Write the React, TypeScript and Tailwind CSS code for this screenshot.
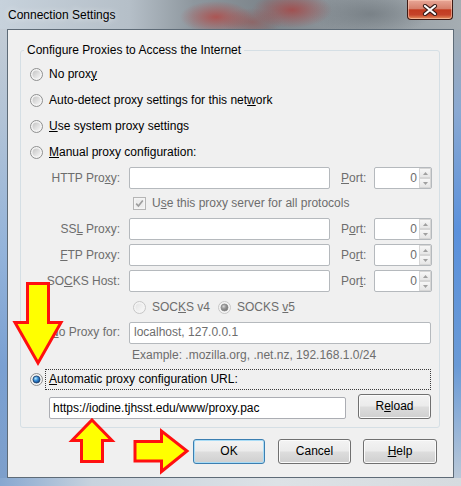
import { useId } from 'react';

function Radio({ checked = false, disabled = false }: { checked?: boolean; disabled?: boolean }) {
  const id = useId().replace(/:/g, '');
  return (
    <svg width="13" height="13" viewBox="0 0 13 13" className="shrink-0">
      <defs>
        <linearGradient id={`in${id}`} x1="0" y1="0" x2="1" y2="1">
          <stop offset="0" stopColor={disabled ? '#e4e4e4' : '#c4c4c4'} />
          <stop offset="1" stopColor={disabled ? '#f8f8f8' : '#f6f6f6'} />
        </linearGradient>
        <radialGradient id={`dot${id}`} cx="0.38" cy="0.35" r="0.7">
          <stop offset="0" stopColor={disabled ? '#d8d8d8' : '#b8ecff'} />
          <stop offset="0.45" stopColor={disabled ? '#9a9a9a' : '#3b8fd8'} />
          <stop offset="1" stopColor={disabled ? '#6f6f6f' : '#0b3f86'} />
        </radialGradient>
      </defs>
      <circle cx="6.5" cy="6.5" r="6" fill="#f4f4f4" stroke={disabled ? '#c6c6c6' : '#8e8f8f'} />
      <circle cx="6.5" cy="6.5" r="4" fill={`url(#in${id})`} />
      {checked && (
        <circle
          cx="6.5"
          cy="6.5"
          r="3.5"
          fill={`url(#dot${id})`}
          stroke={disabled ? '#8a8a8a' : '#1d3f66'}
          strokeWidth="0.8"
        />
      )}
    </svg>
  );
}

function CheckBoxDisabled() {
  return (
    <svg width="13" height="13" viewBox="0 0 13 13" className="shrink-0">
      <rect x="0.5" y="0.5" width="12" height="12" fill="#f4f4f4" stroke="#b5b5b5" />
      <rect x="2.5" y="2.5" width="8" height="8" fill="#ececec" />
      <path d="M3.2 6.6 L5.4 9 L9.8 3.4" fill="none" stroke="#9d9d9d" strokeWidth="1.6" />
    </svg>
  );
}

function Spin({ up }: { up?: boolean }) {
  return (
    <div className="h-[10px] border border-[#d6d6d6] bg-[linear-gradient(180deg,#f7f7f7,#e6e6e6)] flex items-center justify-center">
      <svg width="5" height="3" viewBox="0 0 5 3">
        <path d={up ? 'M0 3 L2.5 0 L5 3 Z' : 'M0 0 L2.5 3 L5 0 Z'} fill="#a0a0a0" />
      </svg>
    </div>
  );
}

function PortBox() {
  return (
    <div className="w-[58px] h-[22px] border border-[#b5b9bd] rounded-[2px] bg-white flex">
      <span className="flex-1 text-right pr-[2px] leading-[20px] text-[#6d6d6d]">0</span>
      <div className="w-[12px] flex flex-col">
        <Spin up />
        <Spin />
      </div>
    </div>
  );
}

function ProxyRow({ label, port }: { label: React.ReactNode; port: React.ReactNode }) {
  return (
    <div className="h-[26px] flex items-center">
      <span className="w-[99px] text-right text-[#6d6d6d]">{label}</span>
      <div className="ml-[9px] w-[201px] h-[22px] border border-[#b5b9bd] rounded-[2px] bg-white" />
      <span className="ml-[11px] w-[33px] text-[#6d6d6d]">{port}</span>
      <PortBox />
    </div>
  );
}

const btn =
  'h-[25px] flex items-center justify-center rounded-[3px] border bg-[linear-gradient(180deg,#f3f3f3_0%,#ebebeb_48%,#dddddd_52%,#cfcfcf_100%)]';

export default function App() {
  return (
    <div className="w-[461px] h-[486px] relative flex flex-col overflow-hidden font-['Liberation_Sans',Arial,sans-serif] text-[12px] leading-[15px] text-black">
      {/* title bar */}
      <div className="h-[29px] shrink-0 flex items-start bg-[image:radial-gradient(ellipse_36px_16px_at_216px_17px,rgba(180,70,66,0.8),transparent),radial-gradient(ellipse_40px_18px_at_292px_10px,rgba(170,62,60,0.75),transparent),radial-gradient(ellipse_30px_14px_at_252px_22px,rgba(150,80,78,0.6),transparent),radial-gradient(ellipse_60px_22px_at_370px_14px,rgba(110,118,124,0.7),transparent),linear-gradient(90deg,#c7d2dc_0%,#b5bfc8_28%,#8e979e_42%,#7c848a_58%,#8f979d_74%,#a5adb2_100%)]">
        <span className="ml-[8px] mt-[8px] [text-shadow:0_0_6px_rgba(255,255,255,0.85)]">
          Connection Settings
        </span>
        <div className="ml-auto mr-[8px] w-[46px] h-[20px] rounded-b-[4px] border border-t-0 border-[#3d1a14] bg-[linear-gradient(180deg,#e8a797_0%,#d6806c_45%,#c23b20_52%,#c5432a_78%,#e4915f_100%)] shadow-[inset_0_0_0_1px_rgba(255,210,190,0.55)] flex items-center justify-center">
          <svg width="16" height="12" viewBox="0 0 16 12">
            <path d="M3 2 L13 10 M13 2 L3 10" stroke="#3a1d18" strokeWidth="4.2" strokeLinecap="round" />
            <path d="M3 2 L13 10 M13 2 L3 10" stroke="#ffffff" strokeWidth="2.2" strokeLinecap="round" />
          </svg>
        </div>
      </div>

      <div className="flex flex-1 min-h-0">
        <div className="w-[7px] bg-[linear-gradient(180deg,#c3ccd5_0%,#b2c3d6_20%,#93b3da_50%,#7aa0d2_75%,#7d9fcb_100%)]" />

        {/* client area */}
        <div className="w-[447px] border border-[#5e6b77] bg-[#f0f0f0] flex flex-col">
          <fieldset className="ml-[12px] mt-[12px] w-[420px] h-[386px] border border-[#d5dfe5] rounded-[3px]">
            <legend className="ml-[3px] px-[3px] leading-[16px]">Configure Proxies to Access the Internet</legend>
            <div className="pt-[3px] flex flex-col">
              <div className="h-[26px] flex items-center pl-[9px] gap-[6px]">
                <Radio />
                <span>
                  No prox<u>y</u>
                </span>
              </div>
              <div className="h-[26px] flex items-center pl-[9px] gap-[6px]">
                <Radio />
                <span>
                  Auto-detect proxy settings for this net<u>w</u>ork
                </span>
              </div>
              <div className="h-[26px] flex items-center pl-[9px] gap-[6px]">
                <Radio />
                <span>
                  <u>U</u>se system proxy settings
                </span>
              </div>
              <div className="h-[26px] flex items-center pl-[9px] gap-[6px]">
                <Radio />
                <span>
                  <u>M</u>anual proxy configuration:
                </span>
              </div>

              <ProxyRow
                label={
                  <>
                    HTTP Pro<u>x</u>y:
                  </>
                }
                port={
                  <>
                    <u>P</u>ort:
                  </>
                }
              />
              <div className="h-[25px] flex items-center pl-[112px] gap-[6px]">
                <CheckBoxDisabled />
                <span className="text-[#6d6d6d]">
                  U<u>s</u>e this proxy server for all protocols
                </span>
              </div>
              <ProxyRow
                label={
                  <>
                    SS<u>L</u> Proxy:
                  </>
                }
                port={
                  <>
                    P<u>o</u>rt:
                  </>
                }
              />
              <ProxyRow
                label={
                  <>
                    <u>F</u>TP Proxy:
                  </>
                }
                port={
                  <>
                    Po<u>r</u>t:
                  </>
                }
              />
              <ProxyRow
                label={
                  <>
                    SO<u>C</u>KS Host:
                  </>
                }
                port={
                  <>
                    Por<u>t</u>:
                  </>
                }
              />

              <div className="h-[26px] flex items-center pl-[112px] text-[#6d6d6d]">
                <div className="w-[85px] flex items-center gap-[6px]">
                  <Radio disabled />
                  <span>
                    SOC<u>K</u>S v4
                  </span>
                </div>
                <div className="flex items-center gap-[6px]">
                  <Radio disabled checked />
                  <span>
                    SOCKS <u>v</u>5
                  </span>
                </div>
              </div>

              <div className="h-[25px] flex items-center">
                <span className="w-[99px] text-right text-[#6d6d6d]">
                  <u>N</u>o Proxy for:
                </span>
                <div className="ml-[9px] w-[302px] h-[22px] border border-[#b5b9bd] rounded-[2px] bg-white flex items-center pl-[4px] text-[#6d6d6d]">
                  localhost, 127.0.0.1
                </div>
              </div>
              <div className="h-[21px] flex items-center pl-[111px] text-[#6d6d6d]">
                Example: .mozilla.org, .net.nz, 192.168.1.0/24
              </div>

              <div className="h-[26px] flex items-center pl-[9px]">
                <Radio checked />
                <div className="ml-[2px] w-[386px] h-[21px] border border-dotted border-[#3a3a3a] flex items-center pl-[3px]">
                  <span>
                    <u>A</u>utomatic proxy configuration URL:
                  </span>
                </div>
              </div>

              <div className="mt-[2px] flex items-end pl-[28px]">
                <div className="w-[297px] h-[22px] border border-[#abadb3] rounded-[2px] bg-white flex items-center pl-[3px]">
                  https://iodine.tjhsst.edu/www/proxy.pac
                </div>
                <div className={`${btn} ml-[12px] w-[73px] border-[#707070] shadow-[inset_0_0_0_1px_#fbfbfb]`}>
                  <span>
                    R<u>e</u>load
                  </span>
                </div>
              </div>
            </div>
          </fieldset>

          <div className="mt-[11px] flex justify-end pr-[16px]">
            <div className={`${btn} w-[72px] border-[#3c7fb1] shadow-[inset_0_0_0_1px_#a9dcf6]`}>OK</div>
            <div className={`${btn} ml-[13px] w-[73px] border-[#707070] shadow-[inset_0_0_0_1px_#fbfbfb]`}>
              Cancel
            </div>
            <div className={`${btn} ml-[12px] w-[74px] border-[#707070] shadow-[inset_0_0_0_1px_#fbfbfb]`}>
              <span>
                <u>H</u>elp
              </span>
            </div>
          </div>
        </div>

        <div className="w-[7px] bg-[linear-gradient(180deg,#a2abb2_0%,#8aa9d2_18%,#5b91dc_45%,#6a9ad6_75%,#b9c8d8_100%)]" />
      </div>
      <div className="h-[8px] shrink-0 bg-[linear-gradient(90deg,#86a7d0_0%,#c8d3de_20%,#dde2e6_60%,#d6dbdf_100%)]" />

      {/* annotation arrows drawn over the dialog */}
      <svg className="absolute left-0 top-0 pointer-events-none" width="461" height="486" viewBox="0 0 461 486">
        <g fill="#ffff00" stroke="#ff1010" strokeWidth="3" strokeLinejoin="miter">
          <polygon points="27.5,283.5 48.5,283.5 48.5,322.5 61,322.5 38,363 15,322.5 27.5,322.5" />
          <polygon points="92,420 112,440.5 102.5,440.5 102.5,461.5 81.5,461.5 81.5,440.5 72,440.5" />
          <polygon points="135,441.5 161.5,441.5 161.5,431 187,451 161.5,471.5 161.5,461 135,461" />
        </g>
      </svg>
    </div>
  );
}
